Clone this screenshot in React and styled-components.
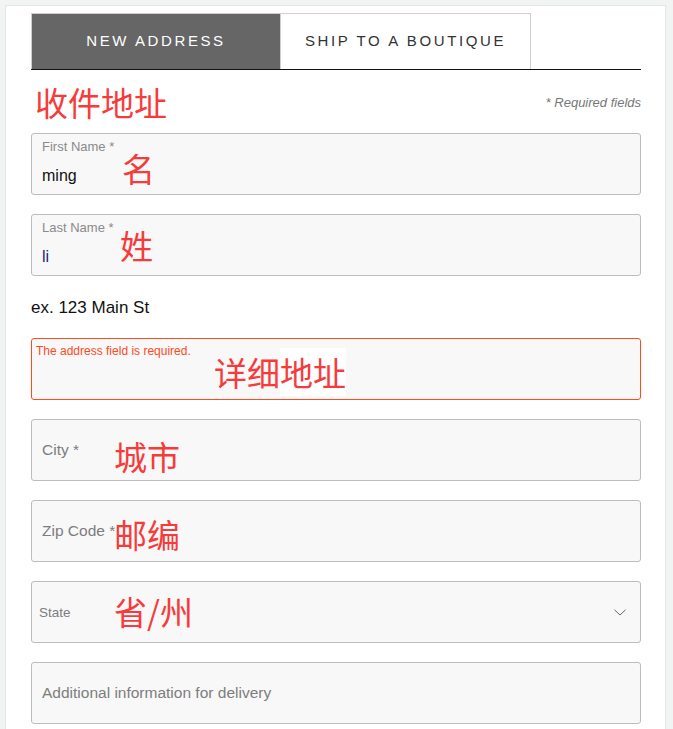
import React from "react";
import styled, { createGlobalStyle, css } from "styled-components";

const GlobalStyle = createGlobalStyle`
  html, body {
    margin: 0;
    padding: 0;
    background: #f2f3f3;
    font-family: "Liberation Sans", Arial, sans-serif;
    color: #222;
  }
`;

const Card = styled.div`
  margin: 5px 7px 0 5px;
  background: #fff;
  border: 1px solid #e6e6e6;
  border-bottom: none;
  padding: 7px 24px 40px 25px;
  min-height: 740px;
  box-sizing: border-box;
`;

const Tabs = styled.div`
  display: flex;
  border-bottom: 1.5px solid #111;
`;

const Tab = styled.div`
  width: 250px;
  height: 56px;
  box-sizing: border-box;
  padding-bottom: 3px;
  display: flex;
  align-items: center;
  justify-content: center;
  font-size: 15px;
  letter-spacing: 2.6px;
  border: 1px solid #cfcfcf;
  border-bottom: none;
  ${p =>
    p.$active
      ? css`
          background: #666;
          color: #fff;
        `
      : css`
          background: #fff;
          color: #333;
          border-left: none;
        `}
`;

const HeaderRow = styled.div`
  display: flex;
  justify-content: space-between;
  align-items: center;
  margin: 13px 0 12px;
  height: 38px;
`;

const Heading = styled.h2`
  margin: 0 0 0 4px;
  font-family: "Noto Sans CJK SC", sans-serif;
  font-weight: 400;
  font-size: 33px;
  line-height: 38px;
  color: #f73b3b;
`;

const Required = styled.span`
  font-style: italic;
  font-size: 13px;
  color: #777;
`;

const Fields = styled.div`
  display: flex;
  flex-direction: column;
`;

const Field = styled.div`
  position: relative;
  height: 62px;
  box-sizing: border-box;
  background: #f8f8f8;
  border: 1px solid ${p => (p.$error ? "#ff4a1c" : "#bdbdbd")};
  border-radius: 3px;
  margin-bottom: 19px;
  display: flex;
  flex-direction: column;
  justify-content: ${p => (p.$filled ? "flex-start" : "center")};
  padding: ${p => (p.$filled ? "5px 10px 0" : "0 10px")};
`;

const FloatLabel = styled.span`
  font-size: 13px;
  line-height: 16px;
  color: #8a8a8a;
`;

const Value = styled.span`
  font-size: 16px;
  line-height: 20px;
  margin-top: 11px;
  color: ${p => p.$color || "#111"};
`;

const Placeholder = styled.span`
  font-size: ${p => p.$size || 15.5}px;
  color: #7d7d7d;
  margin-left: ${p => p.$shift || 0}px;
`;

const ErrorText = styled.span`
  position: absolute;
  left: 4px;
  top: 5px;
  font-size: 12px;
  color: #ff4a1c;
`;

const Hint = styled.div`
  font-size: 17px;
  line-height: 20px;
  margin: 3px 0 20px;
  color: #111;
`;

const Note = styled.span`
  position: absolute;
  left: ${p => p.$left}px;
  top: ${p => p.$top}px;
  font-family: "Noto Sans CJK SC", sans-serif;
  font-size: 33px;
  line-height: 1;
  color: #f73b3b;
  white-space: nowrap;
`;

const Blank = styled.span`
  background: #fff;
`;

const Chevron = styled.svg`
  position: absolute;
  right: 14px;
  top: 27px;
`;

export default function App() {
  return (
    <>
      <GlobalStyle />
      <Card>
        <Tabs>
          <Tab $active>NEW ADDRESS</Tab>
          <Tab>SHIP TO A BOUTIQUE</Tab>
        </Tabs>
        <HeaderRow>
          <Heading>收件地址</Heading>
          <Required>* Required fields</Required>
        </HeaderRow>
        <Fields>
          <Field $filled>
            <FloatLabel>First Name *</FloatLabel>
            <Value>ming</Value>
            <Note $left={90} $top={18}>名</Note>
          </Field>
          <Field $filled>
            <FloatLabel>Last Name *</FloatLabel>
            <Value $color="#1b2a6b">li</Value>
            <Note $left={88} $top={14}>姓</Note>
          </Field>
        </Fields>
        <Hint>ex. 123 Main St</Hint>
        <Fields>
          <Field $error>
            <ErrorText>The address field is required.</ErrorText>
            <Note $left={182} $top={17}>
              详细<Blank>地址</Blank>
            </Note>
          </Field>
          <Field>
            <Placeholder>City *</Placeholder>
            <Note $left={82} $top={20}>城市</Note>
          </Field>
          <Field>
            <Placeholder>Zip Code *</Placeholder>
            <Note $left={82} $top={17}>邮编</Note>
          </Field>
          <Field>
            <Placeholder $size={13.5} $shift={-3}>State</Placeholder>
            <Note $left={82} $top={13}>省/州</Note>
            <Chevron width="12" height="7" viewBox="0 0 12 7">
              <path d="M0.5 0.8 L6 6 L11.5 0.8" fill="none" stroke="#666" strokeWidth="1" />
            </Chevron>
          </Field>
          <Field>
            <Placeholder>Additional information for delivery</Placeholder>
          </Field>
        </Fields>
      </Card>
    </>
  );
}
